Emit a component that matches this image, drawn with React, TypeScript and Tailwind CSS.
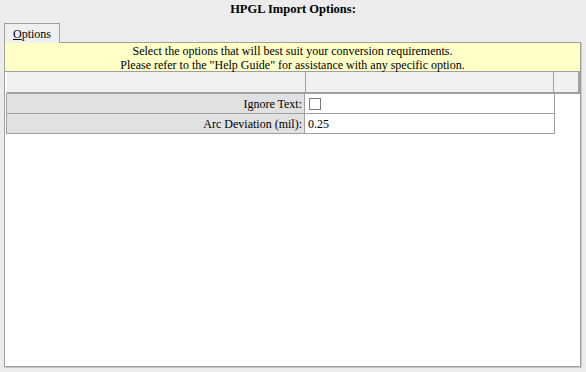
import React from 'react';

export default function App() {
  return (
    <div className="w-[586px] h-[372px] bg-[#ececec] text-[12px] text-black flex flex-col overflow-hidden font-['Liberation_Serif','Times_New_Roman',serif]">
      <div className="h-[23px] pt-[2px] text-center font-bold text-[12.5px] leading-[15px]">HPGL Import Options:</div>

      <div className="flex pl-[4px]">
        <div className="w-[56px] h-[20px] border-t border-l border-r border-[#a0a0a0] bg-[#f0f0f0] pl-[8px] leading-[20px] -mb-px relative z-10">
          <span className="underline">O</span>ptions
        </div>
      </div>

      <div className="ml-[4px] w-[577px] h-[325px] border border-[#a0a0a0] shadow-[1px_1px_0_#c8c8c8] bg-white flex flex-col">
        <div className="h-[29px] bg-[#ffffc8] border-b border-[#a0a0a0] text-center leading-[14px] pt-[1px]">
          <div>Select the options that will best suit your conversion requirements.</div>
          <div>Please refer to the &quot;Help Guide&quot; for assistance with any specific option.</div>
        </div>

        <div className="flex h-[22px] ml-[1px] w-[574px] bg-[#f0f0f0] border-l border-white border-b-2 border-b-[#a0a0a0] border-r-2 border-r-[#a0a0a0]">
          <div className="w-[299px] border-r border-[#a0a0a0]" />
          <div className="w-[248px] border-r border-[#a0a0a0]" />
          <div className="flex-1" />
        </div>

        <div className="ml-[1px] w-[549px] border-l border-[#a0a0a0]">
          <div className="flex h-[20px] border-b border-[#a0a0a0]">
            <div className="w-[298px] bg-[#e1e1e1] text-right pr-[2px] leading-[20px] border-r border-[#a0a0a0]">Ignore Text:</div>
            <div className="flex-1 flex items-center pl-[4px] border-r border-[#a0a0a0]">
              <div className="w-[12px] h-[12px] border border-[#7a7a7a] bg-white" />
            </div>
          </div>
          <div className="flex h-[20px] border-b border-[#a0a0a0]">
            <div className="w-[298px] bg-[#e1e1e1] text-right pr-[2px] leading-[20px] border-r border-[#a0a0a0]">Arc Deviation (mil):</div>
            <div className="flex-1 pl-[3px] leading-[20px] border-r border-[#a0a0a0]">0.25</div>
          </div>
        </div>
      </div>
    </div>
  );
}
